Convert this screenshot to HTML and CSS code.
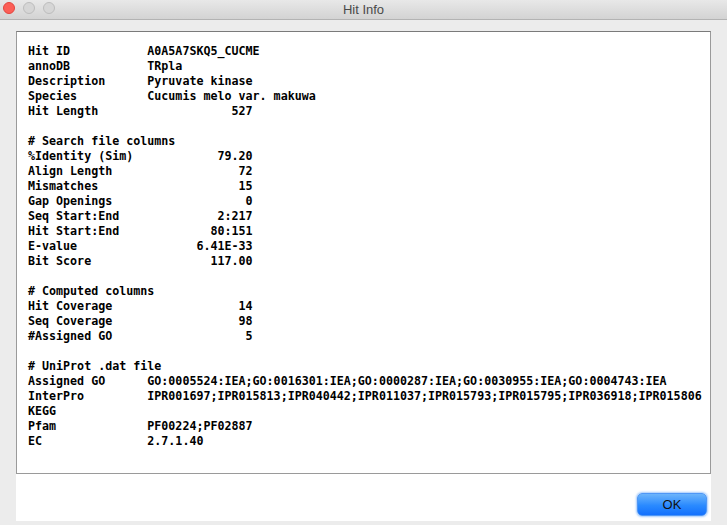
FILE: index.html
```
<!DOCTYPE html>
<html>
<head>
<meta charset="utf-8">
<link rel="stylesheet" href="styles.css">
</head>
<body>
<div class="window">
  <div class="titlebar">
    <div class="lights">
      <span class="light red"></span>
      <span class="light gray"></span>
      <span class="light gray"></span>
    </div>
    <div class="title">Hit Info</div>
  </div>
  <div class="content">
    <div class="textbox">
      <div class="info">
        <div class="row"><span class="k">Hit ID</span><span>A0A5A7SKQ5_CUCME</span></div>
        <div class="row"><span class="k">annoDB</span><span>TRpla</span></div>
        <div class="row"><span class="k">Description</span><span>Pyruvate kinase</span></div>
        <div class="row"><span class="k">Species</span><span>Cucumis melo var. makuwa</span></div>
        <div class="row num"><span>Hit Length</span><span>527</span></div>
        <div class="blank"></div>
        <div class="row"># Search file columns</div>
        <div class="row num"><span>%Identity (Sim)</span><span>79.20</span></div>
        <div class="row num"><span>Align Length</span><span>72</span></div>
        <div class="row num"><span>Mismatches</span><span>15</span></div>
        <div class="row num"><span>Gap Openings</span><span>0</span></div>
        <div class="row num"><span>Seq Start:End</span><span>2:217</span></div>
        <div class="row num"><span>Hit Start:End</span><span>80:151</span></div>
        <div class="row num"><span>E-value</span><span>6.41E-33</span></div>
        <div class="row num"><span>Bit Score</span><span>117.00</span></div>
        <div class="blank"></div>
        <div class="row"># Computed columns</div>
        <div class="row num"><span>Hit Coverage</span><span>14</span></div>
        <div class="row num"><span>Seq Coverage</span><span>98</span></div>
        <div class="row num"><span>#Assigned GO</span><span>5</span></div>
        <div class="blank"></div>
        <div class="row"># UniProt .dat file</div>
        <div class="row"><span class="k">Assigned GO</span><span>GO:0005524:IEA;GO:0016301:IEA;GO:0000287:IEA;GO:0030955:IEA;GO:0004743:IEA</span></div>
        <div class="row"><span class="k">InterPro</span><span>IPR001697;IPR015813;IPR040442;IPR011037;IPR015793;IPR015795;IPR036918;IPR015806</span></div>
        <div class="row"><span class="k">KEGG</span><span></span></div>
        <div class="row"><span class="k">Pfam</span><span>PF00224;PF02887</span></div>
        <div class="row"><span class="k">EC</span><span>2.7.1.40</span></div>
      </div>
    </div>
    <div class="footer">
      <button class="ok">OK</button>
    </div>
  </div>
</div>
</body>
</html>
```
FILE: styles.css
```
html, body {
  margin: 0;
  padding: 0;
  background: #ececec;
}
.window {
  width: 727px;
  height: 525px;
  display: flex;
  flex-direction: column;
  background: #ececec;
  overflow: hidden;
}
.titlebar {
  height: 19px;
  flex: none;
  position: relative;
  display: flex;
  align-items: center;
  justify-content: center;
  background: linear-gradient(#e8e8e8, #d3d3d3);
  border-bottom: 1px solid #b3b3b3;
}
.lights {
  position: absolute;
  left: 3px;
  top: 2px;
  display: flex;
  gap: 8px;
}
.light {
  width: 12px;
  height: 12px;
  box-sizing: border-box;
  border-radius: 50%;
}
.red {
  background: #fc5f57;
  border: 1px solid #e2463f;
}
.gray {
  background: #d6d6d6;
  border: 1px solid #bdbdbd;
}
.title {
  font-family: "Liberation Sans", Arial, sans-serif;
  font-size: 13px;
  color: #4a4a4a;
  margin-top: -1px;
}
.content {
  flex: 1;
  padding: 11px 16px 5px 16px;
  display: flex;
  flex-direction: column;
}
.textbox {
  height: 443px;
  box-sizing: border-box;
  flex: none;
  background: #fff;
  border: 1px solid #9a9a9a;
  border-top-color: #7a7a7a;
  padding: 12px 11px;
  overflow: hidden;
}
.info {
  font-family: "DejaVu Sans Mono", monospace;
  font-weight: bold;
  font-size: 11.66px;
  line-height: 15px;
  color: #000;
}
.row {
  display: flex;
  white-space: pre;
  height: 15px;
}
.k {
  width: 17ch;
  flex: none;
}
.num {
  width: 32ch;
  justify-content: space-between;
}
.blank {
  height: 15px;
}
.footer {
  flex: none;
  height: 47px;
  background: #fff;
  display: flex;
  justify-content: flex-end;
  align-items: flex-start;
  padding: 19px 4px 0 0;
  box-sizing: border-box;
}
.ok {
  width: 70px;
  height: 23px;
  border: 1px solid #4f97f6;
  border-radius: 5px;
  background: linear-gradient(#6cb4fb, #2a8aff 55%, #1370fd);
  box-shadow: 0 0 2px 1px rgba(90, 160, 250, 0.55);
  font-family: "Liberation Sans", Arial, sans-serif;
  font-size: 13px;
  color: #111;
  padding: 0;
}
```
